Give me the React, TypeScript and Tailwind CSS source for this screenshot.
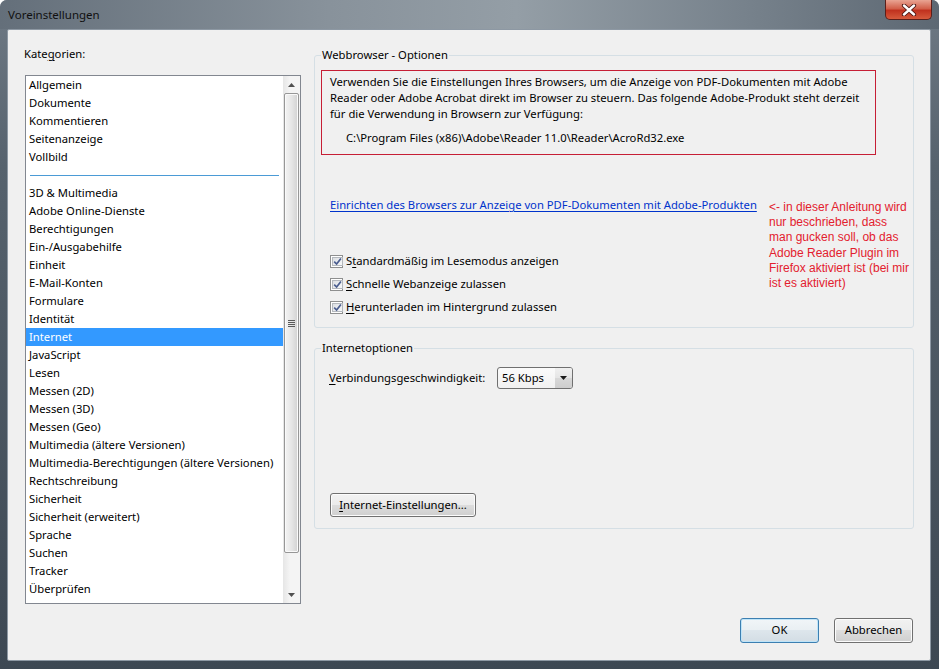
import React from "react";

const top = ["Allgemein", "Dokumente", "Kommentieren", "Seitenanzeige", "Vollbild"];
const rest = [
  "3D & Multimedia",
  "Adobe Online-Dienste",
  "Berechtigungen",
  "Ein-/Ausgabehilfe",
  "Einheit",
  "E-Mail-Konten",
  "Formulare",
  "Identität",
  "Internet",
  "JavaScript",
  "Lesen",
  "Messen (2D)",
  "Messen (3D)",
  "Messen (Geo)",
  "Multimedia (ältere Versionen)",
  "Multimedia-Berechtigungen (ältere Versionen)",
  "Rechtschreibung",
  "Sicherheit",
  "Sicherheit (erweitert)",
  "Sprache",
  "Suchen",
  "Tracker",
  "Überprüfen",
  "Vertrauensmanager",
];

function Item({ label }: { label: string }) {
  const sel = label === "Internet";
  return (
    <div
      className={
        sel
          ? "h-[18px] leading-[18px] pl-[3px] whitespace-nowrap bg-[#3399ff] text-white"
          : "h-[18px] leading-[18px] pl-[3px] whitespace-nowrap"
      }
    >
      {label}
    </div>
  );
}

function Check() {
  return (
    <span className="w-[13px] h-[13px] shrink-0 border border-[#8e8f8f] bg-white p-[1px] flex">
      <span className="flex-1 border border-[#b4b8bd] bg-[linear-gradient(135deg,#dcdfe3,#f7f8f9)] flex items-center justify-center">
        <svg width="9" height="9" viewBox="0 0 9 9">
          <path d="M1.2 4.6 L3.6 7 L7.9 1.4" stroke="#4a5d8f" strokeWidth="1.7" fill="none" />
        </svg>
      </span>
    </span>
  );
}

function Arrow({ up }: { up?: boolean }) {
  return (
    <svg width="7" height="4" viewBox="0 0 7 4">
      <path d={up ? "M0 4 L3.5 0 L7 4 Z" : "M0 0 L7 0 L3.5 4 Z"} fill="#505050" />
    </svg>
  );
}

const btn =
  "border border-[#707070] rounded-[3px] bg-[linear-gradient(#f2f2f2,#ebebeb_50%,#dddddd_50%,#cfcfcf)] shadow-[inset_0_0_0_1px_#fcfcfc] flex items-center justify-center";

export default function App() {
  return (
    <div className="w-[939px] h-[669px] bg-white overflow-hidden">
      <div className="w-[939px] h-[669px] flex flex-col rounded-t-[7px] bg-[linear-gradient(180deg,#6f7a85_0%,#56626d_25%,#3d4853_100%)] font-['Noto_Sans',sans-serif] text-[11.25px] text-black">
        {/* title bar */}
        <div className="h-[29px] shrink-0 flex justify-between items-start rounded-t-[7px] bg-[linear-gradient(90deg,#646f7a_0%,#88929b_35%,#949ea6_55%,#76818b_80%,#5d6873_100%)] pr-[7px]">
          <div className="pl-[8px] pt-[6px] leading-[18px] text-[11.5px] text-[#101010]">Voreinstellungen</div>
          <div className="w-[47px] h-[20px] rounded-b-[5px] border border-t-0 border-[#5b1f1a] bg-[linear-gradient(#e9a493,#d2604a_45%,#c0321f_55%,#d65a3c)] flex items-center justify-center">
            <svg width="16" height="12" viewBox="0 0 16 12">
              <path d="M3 1.5 L13 10.5 M13 1.5 L3 10.5" stroke="#4a1410" strokeWidth="4.2" strokeLinecap="round" />
              <path d="M3 1.5 L13 10.5 M13 1.5 L3 10.5" stroke="#ffffff" strokeWidth="2.4" strokeLinecap="round" />
            </svg>
          </div>
        </div>

        {/* client area */}
        <div className="flex-1 ml-[7px] mr-[8px] mb-[8px] border border-[#8d98a3] rounded-[2px] bg-[#f0f0f0] flex">
          {/* left column */}
          <div className="w-[293px] shrink-0 pl-[16px] pt-[16px] flex flex-col">
            <div className="h-[16px] leading-[16px]">
              Kate<span className="underline underline-offset-2">g</span>orien:
            </div>
            <div className="mt-[13px] ml-[1px] w-[276px] h-[529px] border border-[#828790] bg-white flex">
              <div className="w-[257px] overflow-hidden">
                {top.map((t) => (
                  <Item key={t} label={t} />
                ))}
                <div className="h-[18px] flex items-center pl-[4px] pr-[4px]">
                  <div className="h-px w-[249px] bg-[#4b9bd6]" />
                </div>
                {rest.map((t) => (
                  <Item key={t} label={t} />
                ))}
              </div>
              {/* scrollbar */}
              <div className="w-[17px] flex flex-col bg-[linear-gradient(90deg,#e6e6e6,#f4f4f4_40%,#f4f4f4)]">
                <div className="h-[17px] flex items-center justify-center">
                  <Arrow up />
                </div>
                <div className="h-[460px] mx-[1px] rounded-[2px] border border-[#979797] bg-[linear-gradient(90deg,#f4f4f4,#e6e6e6_50%,#d2d2d2)] shadow-[inset_0_0_0_1px_#fafafa] flex items-center justify-center">
                  <div className="w-[7px] flex flex-col gap-[1px]">
                    <div className="h-px bg-[#5a5a5a]" />
                    <div className="h-px bg-[#5a5a5a]" />
                    <div className="h-px bg-[#5a5a5a]" />
                    <div className="h-px bg-[#5a5a5a]" />
                  </div>
                </div>
                <div className="flex-1" />
                <div className="h-[17px] flex items-center justify-center">
                  <Arrow />
                </div>
              </div>
            </div>
          </div>

          {/* right column */}
          <div className="w-[600px] ml-[13px] shrink-0 pt-[17px] flex flex-col">
            <fieldset className="border border-[#d5dfe5] rounded-[3px] px-[6px] pb-[8px] min-w-0">
              <legend className="px-[1px] leading-[16px]">Webbrowser - Optionen</legend>
              <div className="mt-[7px] w-[555px] h-[85px] border border-[#c61e35] pl-[8px] pt-[3px] leading-[16px] whitespace-nowrap">
                <div>Verwenden Sie die Einstellungen Ihres Browsers, um die Anzeige von PDF-Dokumenten mit Adobe</div>
                <div>Reader oder Adobe Acrobat direkt im Browser zu steuern. Das folgende Adobe-Produkt steht derzeit</div>
                <div>für die Verwendung in Browsern zur Verfügung:</div>
                <div className="mt-[8px] pl-[16px]">C:\Program Files (x86)\Adobe\Reader 11.0\Reader\AcroRd32.exe</div>
              </div>
              <div className="mt-[42px] flex items-start">
                <div className="w-[448px] shrink-0 pl-[9px] flex flex-col">
                  <div className="leading-[16px] text-[#0033cc] underline underline-offset-2 whitespace-nowrap">
                    Einrichten des Browsers zur Anzeige von PDF-Dokumenten mit Adobe-Produkten
                  </div>
                  <div className="mt-[37px] flex flex-col">
                    <div className="h-[23px] flex items-center gap-[3px]">
                      <Check />
                      <span>
                        S<span className="underline underline-offset-2">t</span>andardmäßig im Lesemodus anzeigen
                      </span>
                    </div>
                    <div className="h-[23px] flex items-center gap-[3px]">
                      <Check />
                      <span>
                        <span className="underline underline-offset-2">S</span>chnelle Webanzeige zulassen
                      </span>
                    </div>
                    <div className="h-[23px] flex items-center gap-[3px]">
                      <Check />
                      <span>
                        <span className="underline underline-offset-2">H</span>erunterladen im Hintergrund zulassen
                      </span>
                    </div>
                  </div>
                </div>
                <div className="mt-[3px] font-['Liberation_Sans',Arial,sans-serif] text-[12px] leading-[15.2px] text-[#e3202e] whitespace-nowrap">
                  <div>&lt;- in dieser Anleitung wird</div>
                  <div>nur beschrieben, dass</div>
                  <div>man gucken soll, ob das</div>
                  <div>Adobe Reader Plugin im</div>
                  <div>Firefox aktiviert ist (bei mir</div>
                  <div>ist es aktiviert)</div>
                </div>
              </div>
            </fieldset>

            <fieldset className="mt-[12px] border border-[#d5dfe5] rounded-[3px] px-[6px] pb-[11px] min-w-0">
              <legend className="px-[1px] leading-[16px]">Internetoptionen</legend>
              <div className="mt-[11px] pl-[8px] flex items-center">
                <div className="w-[168px] shrink-0">
                  <span className="underline underline-offset-2">V</span>erbindungsgeschwindigkeit:
                </div>
                <div className="w-[76px] h-[22px] border border-[#707070] rounded-[3px] flex overflow-hidden bg-[linear-gradient(#fbfbfb,#f1f1f1)]">
                  <div className="flex-1 pl-[4px] leading-[20px]">56 Kbps</div>
                  <div className="w-[17px] flex items-center justify-center bg-[linear-gradient(#f0f0f0,#e5e5e5_50%,#d8d8d8_50%,#cdcdcd)]">
                    <svg width="7" height="4" viewBox="0 0 7 4">
                      <path d="M0 0 L7 0 L3.5 4 Z" fill="#1a1a1a" />
                    </svg>
                  </div>
                </div>
              </div>
              <div className="mt-[104px] ml-[9px] w-[146px] h-[24px]">
                <div className={btn + " w-full h-full"}>
                  <span>
                    <span className="underline underline-offset-2">I</span>nternet-Einstellungen...
                  </span>
                </div>
              </div>
            </fieldset>

            <div className="mt-auto mb-[17px] pr-[1px] flex justify-end gap-[15px]">
              <div className="w-[79px] h-[25px] border border-[#3c7fb1] rounded-[3px] bg-[linear-gradient(#f1f5f8,#e9eff3_50%,#dde6ec_50%,#d3dde4)] shadow-[inset_0_0_0_1px_#bfe4f8] flex items-center justify-center">
                OK
              </div>
              <div className={btn + " w-[79px] h-[25px]"}>Abbrechen</div>
            </div>
          </div>
        </div>
      </div>
    </div>
  );
}
